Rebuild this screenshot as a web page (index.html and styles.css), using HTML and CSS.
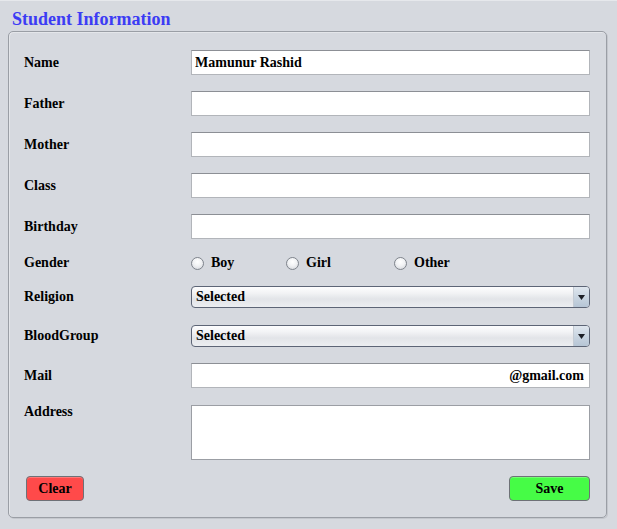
FILE: index.html
```html
<!DOCTYPE html>
<html>
<head>
<meta charset="utf-8">
<link rel="stylesheet" href="styles.css">
</head>
<body>
<div class="frame">
  <div class="title">Student Information</div>
  <div class="panel">
    <div class="row r-text"><label class="lbl">Name</label><input class="field" type="text" value="Mamunur Rashid"></div>
    <div class="row r-text"><label class="lbl">Father</label><input class="field" type="text" value=""></div>
    <div class="row r-text"><label class="lbl">Mother</label><input class="field" type="text" value=""></div>
    <div class="row r-text"><label class="lbl">Class</label><input class="field" type="text" value=""></div>
    <div class="row r-text"><label class="lbl">Birthday</label><input class="field" type="text" value=""></div>
    <div class="row r-gender"><label class="lbl">Gender</label>
      <div class="radios">
        <label class="opt opt-boy"><span class="radio"></span>Boy</label>
        <label class="opt opt-girl"><span class="radio"></span>Girl</label>
        <label class="opt"><span class="radio"></span>Other</label>
      </div>
    </div>
    <div class="row r-combo r-religion"><label class="lbl">Religion</label>
      <div class="combo"><span class="combo-text">Selected</span><span class="combo-btn"><svg width="7" height="5" viewBox="0 0 7 5"><path d="M0 0H7L3.5 5Z" fill="#1c1f26"/></svg></span></div>
    </div>
    <div class="row r-combo r-blood"><label class="lbl">BloodGroup</label>
      <div class="combo"><span class="combo-text">Selected</span><span class="combo-btn"><svg width="7" height="5" viewBox="0 0 7 5"><path d="M0 0H7L3.5 5Z" fill="#1c1f26"/></svg></span></div>
    </div>
    <div class="row r-text r-mail"><label class="lbl">Mail</label><input class="field mail" type="text" value="@gmail.com"></div>
    <div class="row r-address"><label class="lbl lbl-top">Address</label><textarea class="field area"></textarea></div>
    <div class="buttons">
      <button class="btn clear">Clear</button>
      <button class="btn save">Save</button>
    </div>
  </div>
</div>
</body>
</html>
```
FILE: styles.css
```css
html, body {
  margin: 0;
  padding: 0;
  background: #d6d9df;
}
body {
  font-family: "Liberation Serif", "Times New Roman", serif;
  font-weight: bold;
  font-size: 14px;
  color: #000;
  width: 617px;
  height: 529px;
  overflow: hidden;
}
.frame {
  border-top: 1px solid #e6e8ec;
  padding: 0 10px 0 8px;
}
.title {
  color: #3c3cf4;
  font-size: 18px;
  line-height: 20px;
  padding: 8px 0 2px 4px;
  height: 20px;
}
.panel {
  border: 1px solid #9a9ea5;
  border-radius: 5px;
  box-shadow: 1px 1px 0 #c4c7cd, inset 1px 1px 0 #e4e6ea;
  padding: 18px 16px 15px 15px;
  display: flex;
  flex-direction: column;
  gap: 16px;
  height: 452px;
  box-sizing: content-box;
}
.row {
  display: grid;
  grid-template-columns: 167px 1fr;
  align-items: center;
}
.lbl {
  font-size: 14px;
  line-height: 16px;
}
.lbl-top {
  align-self: start;
  margin-top: -1px;
}
.r-text { height: 25px; }
.field {
  font-family: "Liberation Serif", "Times New Roman", serif;
  font-weight: bold;
  font-size: 14px;
  color: #000;
  height: 25px;
  box-sizing: border-box;
  border: 1px solid #b2b5ba;
  border-top-color: #8c8f95;
  background: #fff;
  padding: 0 3px;
  margin: 0;
  outline: none;
  width: 399px;
}
.mail { text-align: right; padding-right: 5px; }
.r-gender { height: 22px; margin-top: -3px; }
.radios { display: flex; align-items: center; }
.opt { display: flex; align-items: center; gap: 7px; }
.opt-boy { width: 95px; }
.opt-girl { width: 108px; }
.radio {
  width: 13px;
  height: 13px;
  box-sizing: border-box;
  border-radius: 50%;
  border: 1px solid #7f848c;
  background: radial-gradient(circle at 50% 35%, #ffffff 0%, #f1f2f4 45%, #cfd2d8 100%);
}
.r-combo { height: 22px; }
.r-religion { margin-top: -4px; }
.r-blood { margin-top: 1px; }
.combo {
  width: 399px;
  height: 22px;
  box-sizing: border-box;
  border: 1px solid #5d6576;
  border-radius: 4px;
  background: linear-gradient(#fdfdfe 0%, #f2f3f5 30%, #e2e4e8 60%, #eceef1 100%);
  display: flex;
  align-items: center;
  justify-content: space-between;
  overflow: hidden;
}
.combo-text { padding-left: 4px; line-height: 16px; }
.combo-btn {
  width: 15px;
  height: 100%;
  border-left: 1px solid #c4cbd4;
  background: linear-gradient(#dfe6ee 0%, #c9d5e1 50%, #b6c5d5 100%);
  display: flex;
  align-items: center;
  justify-content: center;
}
.r-address { height: 55px; margin-top: 1px; }
.area {
  height: 55px;
  resize: none;
  display: block;
  border: 1px solid #9b9ea4;
}
.buttons {
  display: flex;
  justify-content: space-between;
  padding-left: 2px;
}
.btn {
  font-family: "Liberation Serif", "Times New Roman", serif;
  font-weight: bold;
  font-size: 14px;
  height: 25px;
  border: 1px solid #6e7177;
  border-radius: 4px;
  padding: 0;
  color: #000;
  box-shadow: inset 0 1px 0 rgba(255,255,255,0.25);
}
.clear { width: 58px; background: #ff4a4a; }
.save { width: 81px; background: #46fc46; }
```
